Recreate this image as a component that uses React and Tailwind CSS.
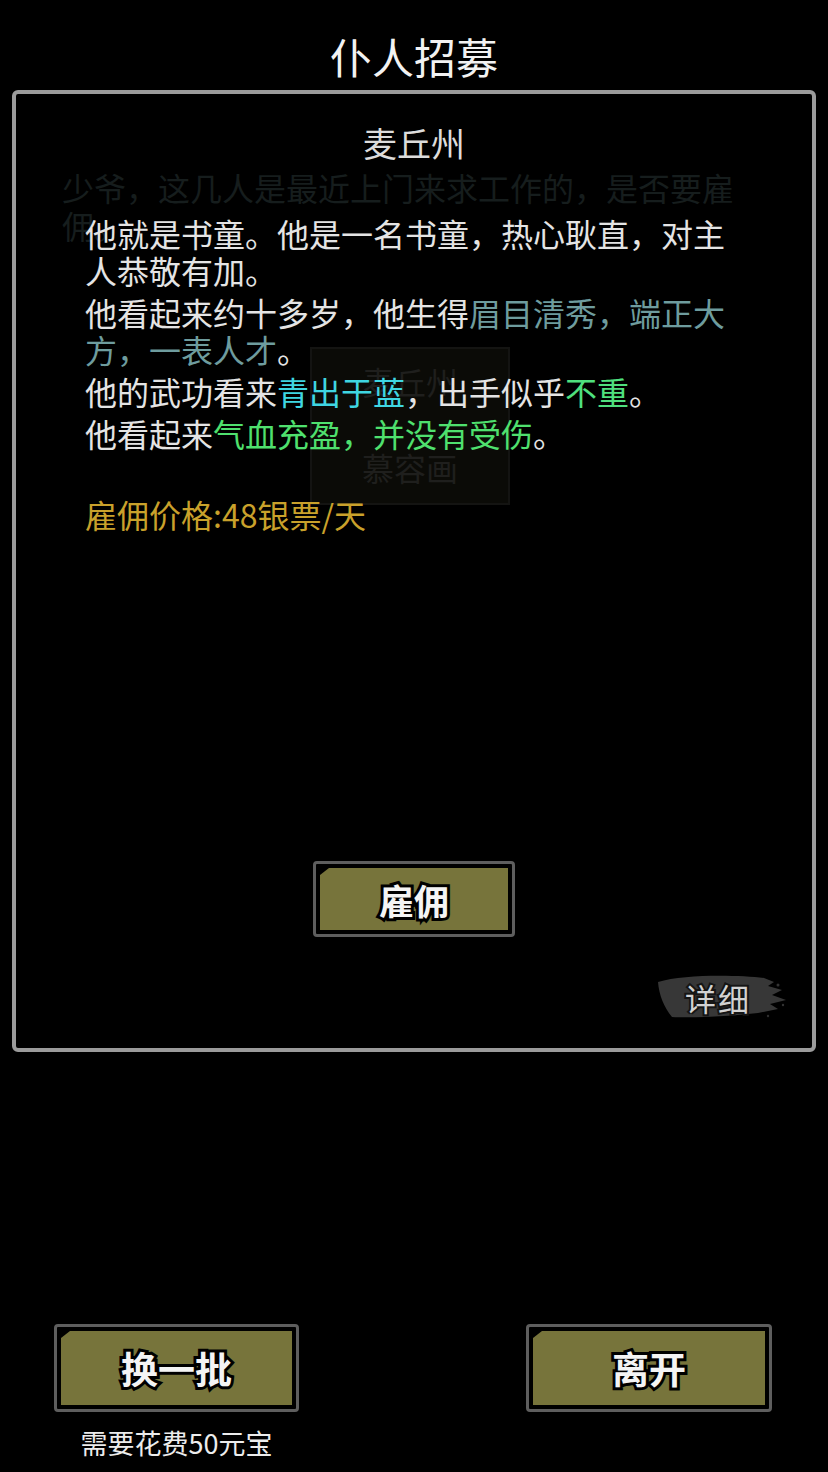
import React from 'react';

// olive game-style button with the clipped top-left corner
function GameButton({ label, className, labelSize = 'text-[37px]' }) {
  return (
    <div className={`border-[3px] border-[#5e5e5e] rounded-[4px] bg-black p-[4px] flex ${className}`}>
      <div className="flex-1 bg-[#77743b] flex items-center justify-center [clip-path:polygon(9px_0,100%_0,100%_100%,0_100%,0_7px)]">
        <span className={`${labelSize} font-bold text-[#f4f4f4] leading-none [-webkit-text-stroke:6px_#000] [paint-order:stroke_fill]`}>
          {label}
        </span>
      </div>
    </div>
  );
}

function DetailTag() {
  return (
    <div className="relative w-[132px] h-[48px] flex items-center justify-center">
      <svg className="absolute inset-0" width="132" height="48" viewBox="0 0 132 48">
        <path
          d="M2 9 C 28 1, 82 2, 108 5 L 118 9 L 112 13 L 126 17 L 116 22 L 130 27 L 114 31 L 122 36 L 102 40 C 66 44, 34 45, 16 44 C 8 34, 3 22, 2 9 Z"
          fill="#373737"
        />
        <circle cx="122" cy="12" r="1.5" fill="#333" />
        <circle cx="127" cy="32" r="1.2" fill="#333" />
        <circle cx="112" cy="43" r="1.2" fill="#2e2e2e" />
      </svg>
      <span className="relative text-[31px] leading-none text-[#d2d2d2] tracking-[2px] [-webkit-text-stroke:4px_#151515] [paint-order:stroke_fill] mr-[8px]">
        详细
      </span>
    </div>
  );
}

export default function App() {
  return (
    <div className="w-full h-[1472px] bg-black flex flex-col font-['Noto_Sans_CJK_SC',sans-serif]">
      <header className="h-[90px] pt-5 flex items-center justify-center text-[42px] text-[#f2f2f2]">
        仆人招募
      </header>

      <section className="mx-3 h-[962px] border-4 border-[#9b9b9b] rounded-md relative flex flex-col">
        {/* dimmed dialog underneath */}
        <div className="absolute inset-0 pointer-events-none">
          <p className="absolute left-[46px] top-[74px] w-[690px] text-[32px] leading-[38px] text-[#161d1d]">
            少爷，这几人是最近上门来求工作的，是否要雇佣。
          </p>
          <div className="absolute left-[294px] top-[253px] w-[200px] h-[158px] bg-[#0b0b07] border-2 border-[#141412] flex flex-col items-center text-[32px] text-[#1f1f1d]">
            <span className="mt-[12px] leading-[40px]">麦丘州</span>
            <span className="mt-[46px] leading-[40px]">慕容画</span>
          </div>
        </div>

        <h2 className="relative mt-[29px] text-center text-[34px] leading-[40px] text-[#dcdcdc]">麦丘州</h2>

        <div className="relative mt-[52px] ml-[69px] w-[655px] text-[32px] leading-[37px] text-[#e4e4e4] flex flex-col gap-[5px]">
          <p>他就是书童。他是一名书童，热心耿直，对主人恭敬有加。</p>
          <p>
            他看起来约十多岁，他生得<span className="text-[#6e9c9e]">眉目清秀，端正大方，一表人才</span>。
          </p>
          <p>
            他的武功看来<span className="text-[#3fd6e2]">青出于蓝</span>，出手似乎<span className="text-[#4fe07e]">不重</span>。
          </p>
          <p>
            他看起来<span className="text-[#4fe06e]">气血充盈，并没有受伤</span>。
          </p>
        </div>

        <p className="relative mt-[44px] ml-[69px] text-[32px] leading-[37px] text-[#c9a12b]">雇佣价格:48银票/天</p>

        <GameButton label="雇佣" labelSize="text-[35px]" className="relative self-center mt-[328px] w-[202px] h-[76px]" />

        <div className="relative self-end mr-[24px] mt-[36px]">
          <DetailTag />
        </div>
      </section>

      <div className="mt-[272px] pl-[54px] pr-[56px] flex justify-between items-start">
        <div className="flex flex-col items-center">
          <GameButton label="换一批" className="w-[245px] h-[88px]" />
          <span className="mt-[15px] text-[27px] leading-[32px] text-[#ececec]">需要花费50元宝</span>
        </div>
        <GameButton label="离开" className="w-[246px] h-[88px]" />
      </div>
    </div>
  );
}
